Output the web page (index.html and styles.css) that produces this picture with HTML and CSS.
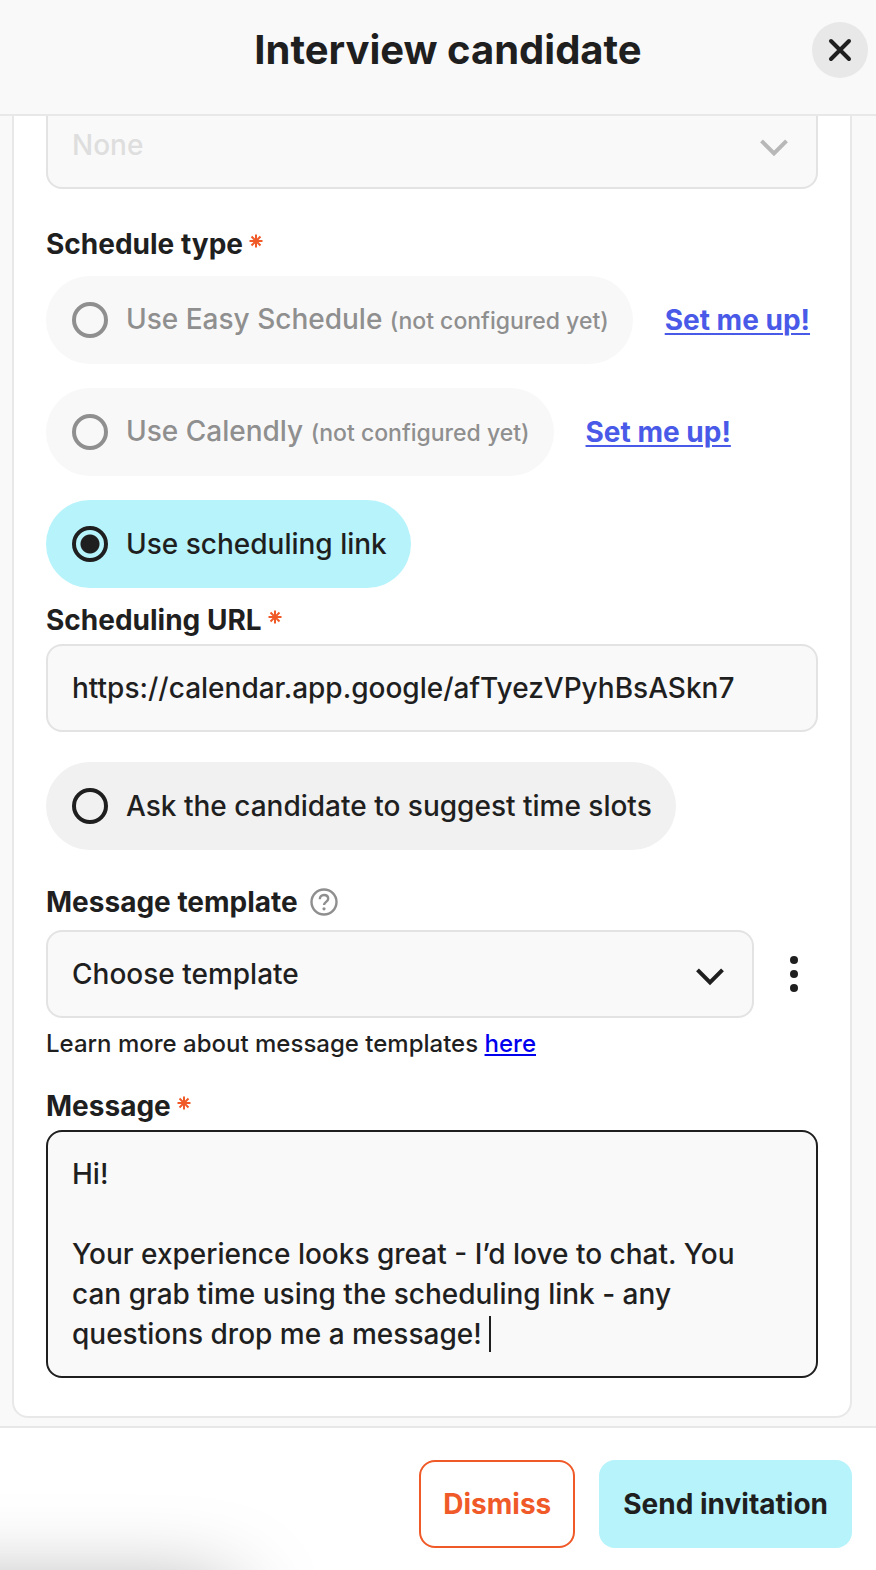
FILE: index.html
```html
<!doctype html>
<html lang="en">
    <head>
        <meta charset="UTF-8" />
        <meta name="viewport" content="width=device-width, initial-scale=1.0" />
        <title>Interview candidate</title>
        <link rel="stylesheet" href="styles.css">
    </head>
    <body>
        <svg width="0" height="0" class="sprite" aria-hidden="true">
            <symbol id="asterisk" viewBox="0 0 14 14">
                <path d="M7 0.5v13M0.5 7h13M2.5 2.5l9 9M11.5 2.5l-9 9" />
            </symbol>
            <symbol id="chevron" viewBox="0 0 28 18">
                <path d="M1.5 1.8L14 14.3L26.5 1.8" />
            </symbol>
        </svg>

        <form class="dialog">
            <header class="dialog-header">
                <h1>Interview candidate</h1>
                <button type="button" class="close" aria-label="Close">
                    <svg width="24" height="24" viewBox="0 0 24 24">
                        <path d="M3 3l18 18M21 3L3 21" />
                    </svg>
                </button>
            </header>

            <main class="dialog-body">
                <div class="card">
                    <div class="select disabled">
                        <select aria-label="Interview stage" disabled>
                            <option>None</option>
                        </select>
                        <svg class="chevron"><use href="#chevron" /></svg>
                    </div>

                    <fieldset class="schedule">
                        <legend class="label">
                            Schedule type
                            <svg class="required"><use href="#asterisk" /></svg>
                        </legend>
                        <div class="option">
                            <label class="pill disabled">
                                <input type="radio" name="schedule" disabled />
                                <span>Use Easy Schedule <small>(not configured yet)</small></span>
                            </label>
                            <a class="setup" href="#">Set me up!</a>
                        </div>
                        <div class="option">
                            <label class="pill disabled">
                                <input type="radio" name="schedule" disabled />
                                <span>Use Calendly <small>(not configured yet)</small></span>
                            </label>
                            <a class="setup" href="#">Set me up!</a>
                        </div>
                        <div class="option">
                            <label class="pill">
                                <input type="radio" name="schedule" checked />
                                <span>Use scheduling link</span>
                            </label>
                        </div>
                        <div class="url">
                            <label class="label" for="url">
                                Scheduling URL
                                <svg class="required"><use href="#asterisk" /></svg>
                            </label>
                            <input
                                id="url"
                                class="field"
                                type="text"
                                value="https://calendar.app.google/afTyezVPyhBsASkn7"
                            />
                        </div>
                        <div class="option">
                            <label class="pill">
                                <input type="radio" name="schedule" />
                                <span>Ask the candidate to suggest time slots</span>
                            </label>
                        </div>
                    </fieldset>

                    <div class="template">
                        <div class="label">
                            <label for="template">Message template</label>
                            <button type="button" class="help" aria-label="Help">
                                <svg width="28" height="28" viewBox="0 0 28 28">
                                    <circle cx="14" cy="14" r="12.5" />
                                    <path d="M9.8 11.2c0-2.5 1.7-4.2 4.2-4.2s4.2 1.6 4.2 3.8c0 3-4.2 3.2-4.2 6.2" />
                                    <circle class="dot" cx="14" cy="20.8" r="1.6" />
                                </svg>
                            </button>
                        </div>
                        <div class="template-row">
                            <div class="select">
                                <select id="template">
                                    <option>Choose template</option>
                                </select>
                                <svg class="chevron"><use href="#chevron" /></svg>
                            </div>
                            <button type="button" class="more" aria-label="More options">
                                <svg width="8" height="36" viewBox="0 0 8 36">
                                    <circle cx="4" cy="4" r="4" />
                                    <circle cx="4" cy="18" r="4" />
                                    <circle cx="4" cy="32" r="4" />
                                </svg>
                            </button>
                        </div>
                        <p class="hint">Learn more about message templates <a href="#">here</a></p>
                    </div>

                    <div class="message">
                        <label class="label" for="message">
                            Message
                            <svg class="required"><use href="#asterisk" /></svg>
                        </label>
                        <div class="message-box">
                            <textarea id="message" rows="5">Hi!

Your experience looks great - I’d love to chat. You can grab time using the scheduling link - any questions drop me a message! </textarea>
                            <span class="caret"></span>
                        </div>
                    </div>
                </div>
            </main>

            <footer class="dialog-footer">
                <button type="button" class="btn btn-outline">Dismiss</button>
                <button type="submit" class="btn btn-primary">Send invitation</button>
            </footer>
        </form>
    </body>
</html>
```
FILE: styles.css
```css
* {
    box-sizing: border-box;
}

body {
    margin: 0;
    background: #f9f9f9;
    color: #1f1f1f;
    font-family: "Inter", sans-serif;
    font-size: 28px;
    font-weight: 500;
    line-height: 40px;
}

button,
input,
select,
textarea {
    font: inherit;
    color: inherit;
}

button {
    border: none;
    background: none;
    padding: 0;
    cursor: pointer;
}

svg {
    display: block;
    fill: none;
    stroke: currentColor;
}

.sprite {
    position: absolute;
}

.dialog {
    display: flex;
    flex-direction: column;
    height: 100vh;
    overflow: hidden;
}

/* Header */
.dialog-header {
    display: flex;
    align-items: center;
    padding: 22px 8px 36px 84px;
    border-bottom: 2px solid #e8e8e8;
}

h1 {
    flex: 1;
    margin: 0;
    font-size: 40px;
    font-weight: 700;
    line-height: 56px;
    text-align: center;
}

.close {
    display: flex;
    align-items: center;
    justify-content: center;
    width: 56px;
    height: 56px;
    border-radius: 50%;
    background: #e8e8e8;
}

.close svg {
    stroke-width: 4;
    stroke-linecap: round;
}

/* Body, scrolled to its end */
.dialog-body {
    display: flex;
    flex: 1;
    flex-direction: column;
    justify-content: flex-end;
    min-height: 0;
    overflow: hidden;
    padding: 0 24px 8px 12px;
}

.card {
    padding: 32px 32px 38px;
    border: 2px solid #e8e8e8;
    border-radius: 16px;
    background: #ffffff;
}

.label {
    display: flex;
    align-items: center;
    gap: 6px;
    padding: 0;
    font-weight: 700;
}

.required {
    width: 14px;
    height: 20px;
    padding-bottom: 6px;
    color: #f05a28;
    stroke-width: 2;
}

.field,
select,
textarea {
    display: block;
    width: 100%;
    padding: 22px 24px;
    border: 2px solid #e3e3e3;
    border-radius: 16px;
    background: #f9f9f9;
    outline: none;
}

.field,
select {
    height: 88px;
}

.select {
    position: relative;
    flex: 1;
}

select {
    appearance: none;
    opacity: 1;
}

.chevron {
    position: absolute;
    top: 38px;
    right: 30px;
    width: 28px;
    height: 18px;
    stroke-width: 4;
    pointer-events: none;
}

.select.disabled {
    color: #dedede;
}

.select.disabled .chevron {
    color: #b8b8b8;
}

/* Schedule type */
.schedule {
    min-width: 0;
    margin: 35px 0 32px;
    padding: 0;
    border: none;
}

.schedule legend {
    margin-bottom: 12px;
}

.option {
    display: flex;
    align-items: center;
    gap: 32px;
}

.option + .option {
    margin-top: 24px;
}

.pill {
    display: flex;
    align-items: center;
    gap: 18px;
    height: 88px;
    padding: 0 24px 0 26px;
    border-radius: 44px;
    background: #f1f1f1;
}

.pill:has(input:checked) {
    background: #b6f3fb;
}

.pill.disabled {
    background: #f8f8f8;
    color: #8f8f8f;
}

.pill small {
    font-size: 23px;
}

.pill input {
    appearance: none;
    flex: none;
    width: 36px;
    height: 36px;
    margin: 0;
    border: 4px solid currentColor;
    border-radius: 50%;
}

.pill input:checked {
    background: radial-gradient(circle, currentColor 9px, transparent 10px);
}

.setup {
    color: #4a5ae8;
    font-weight: 700;
    text-underline-offset: 3px;
    text-decoration-thickness: 2px;
}

.url {
    margin: 12px 0 30px;
}

.url .label,
.message .label {
    margin-bottom: 4px;
}

/* Message template */
.template .label {
    gap: 12px;
    margin-bottom: 8px;
}

.help {
    color: #8f8f8f;
    stroke-width: 2.4;
}

.help .dot {
    fill: currentColor;
    stroke: none;
}

.template-row {
    display: flex;
    align-items: center;
    gap: 16px;
}

.more {
    display: flex;
    align-items: center;
    justify-content: center;
    width: 48px;
    height: 48px;
}

.more svg {
    fill: currentColor;
    stroke: none;
}

.hint {
    margin: 10px 0 26px;
    font-size: 24px;
    line-height: 32px;
}

.hint a {
    color: #0000ee;
}

/* Message */
.message-box {
    position: relative;
}

textarea {
    padding-right: 40px;
    border-color: #1f1f1f;
    resize: none;
    overflow: hidden;
}

.caret {
    position: absolute;
    left: 443px;
    bottom: 26px;
    width: 2px;
    height: 36px;
    background: #1f1f1f;
}

/* Footer */
.dialog-footer {
    position: relative;
    display: flex;
    justify-content: flex-end;
    gap: 24px;
    padding: 32px 24px 22px;
    border-top: 2px solid #e8e8e8;
    background: #ffffff;
    overflow: hidden;
}

/* soft shade in the bottom left corner */
.dialog-footer::before {
    content: "";
    position: absolute;
    top: 100%;
    left: -200px;
    width: 430px;
    height: 200px;
    margin-top: 24px;
    box-shadow: 0 0 90px rgba(0, 0, 0, 0.4);
}

.btn {
    height: 88px;
    padding: 0 22px;
    border: 2px solid transparent;
    border-radius: 16px;
    font-weight: 700;
}

.btn-outline {
    border-color: #f05a28;
    color: #f05a28;
}

.btn-primary {
    background: #b6f3fb;
}
```
